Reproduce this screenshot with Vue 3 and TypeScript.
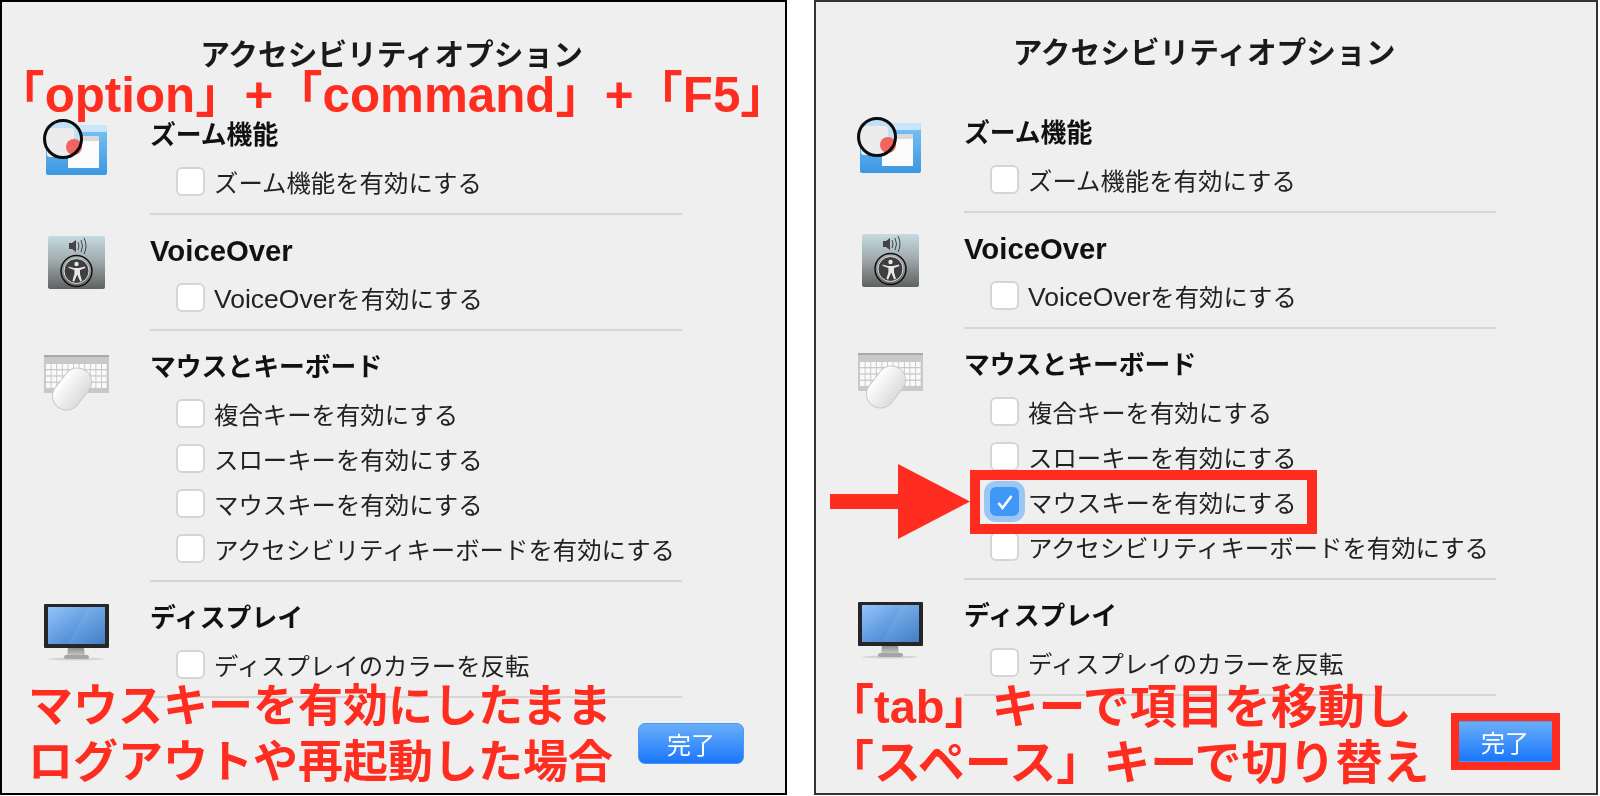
<script setup lang="ts">
interface Section {
  icon: string;
  heading: string;
  options: string[];
}

const sections: Section[] = [
  { icon: 'icon-zoom', heading: 'ズーム機能', options: ['ズーム機能を有効にする'] },
  { icon: 'icon-voice', heading: 'VoiceOver', options: ['VoiceOverを有効にする'] },
  {
    icon: 'icon-keyboard',
    heading: 'マウスとキーボード',
    options: [
      '複合キーを有効にする',
      'スローキーを有効にする',
      'マウスキーを有効にする',
      'アクセシビリティキーボードを有効にする',
    ],
  },
  { icon: 'icon-display', heading: 'ディスプレイ', options: ['ディスプレイのカラーを反転'] },
];

const panels = [
  { side: 'left', notes: ['マウスキーを有効にしたまま', 'ログアウトや再起動した場合'] },
  { side: 'right', notes: ['「tab」キーで項目を移動し', '「スペース」キーで切り替え'] },
];

const keyRows = [0, 1, 2, 3];
const keyCols = [0, 1, 2, 3, 4, 5, 6, 7, 8, 9, 10];

// the one box that is ticked in the right hand panel
function isChecked(side: string, option: string) {
  return side === 'right' && option === 'マウスキーを有効にする';
}
</script>

<template>
  <div class="page">
    <svg class="sprite" aria-hidden="true">
      <defs>
        <linearGradient id="g-blue" x1="0" y1="0" x2="0" y2="1">
          <stop offset="0" stop-color="#7cc4f5" />
          <stop offset="1" stop-color="#3c97e2" />
        </linearGradient>
        <linearGradient id="g-steel" x1="0" y1="0" x2="0" y2="1">
          <stop offset="0" stop-color="#c4dbe2" />
          <stop offset="0.45" stop-color="#a2acae" />
          <stop offset="1" stop-color="#5f6161" />
        </linearGradient>
        <linearGradient id="g-screen" x1="0" y1="0" x2="1" y2="1">
          <stop offset="0" stop-color="#93c4fb" />
          <stop offset="1" stop-color="#2f74c4" />
        </linearGradient>
        <linearGradient id="g-mouse" x1="0" y1="0" x2="1" y2="0">
          <stop offset="0" stop-color="#ffffff" />
          <stop offset="1" stop-color="#dcdcdc" />
        </linearGradient>
        <linearGradient id="g-stand" x1="0" y1="0" x2="0" y2="1">
          <stop offset="0" stop-color="#8f8f8f" />
          <stop offset="1" stop-color="#d4d4d4" />
        </linearGradient>
      </defs>
      <symbol id="icon-zoom" viewBox="0 0 80 72">
        <rect x="10" y="10" width="61" height="50" rx="2" fill="url(#g-blue)" />
        <rect x="10" y="10" width="61" height="7" rx="2" fill="#c8e6fb" />
        <rect x="32" y="21" width="31" height="32" fill="#fbfbfb" />
        <rect x="32" y="21" width="31" height="5" fill="#d9d9d9" />
        <circle cx="27" cy="24" r="18" fill="#bfe0f6" />
        <rect x="11" y="13" width="27" height="29" rx="3" fill="#ececec" />
        <circle cx="38" cy="32" r="8" fill="#f2655f" />
        <circle cx="27" cy="24" r="18.500" fill="none" stroke="#0c0c0c" stroke-width="3" />
      </symbol>
      <symbol id="icon-voice" viewBox="0 -3 80 72">
        <rect x="12" y="2" width="57" height="53" rx="2" fill="url(#g-steel)" />
        <path d="M33 9h3l4-3v12l-4-3h-3z" fill="#444" />
        <path d="M42 8q2 4 0 8M45 6q3 6 0 12M48 4q4 8 0 16" fill="none" stroke="#444" stroke-width="1" />
        <circle cx="40.500" cy="37" r="15.500" fill="none" stroke="#111" stroke-width="1.500" />
        <circle cx="40.500" cy="37" r="12.500" fill="#3e3e3e" stroke="#ddd" stroke-width="1" />
        <circle cx="40.500" cy="30" r="2.200" fill="#e8e8e8" />
        <path d="M32 32.500l6 1.500h5l6-1.500.4 1.500-5.400 2v4l2 7-1.800.5-3-7-3 7-1.800-.5 2-7v-4l-5.400-2z" fill="#e8e8e8" />
      </symbol>
      <symbol id="icon-keyboard" viewBox="0 -3 80 72">
        <rect x="8" y="5" width="65" height="38" fill="#c9c9c9" />
        <rect x="8" y="5" width="65" height="2" fill="#a8a8a8" />
        <g fill="#fafafa">
          <g v-for="r in keyRows" :key="r">
            <rect v-for="c in keyCols" :key="c" :x="10 + c * 5.600" :y="14 + r * 6.300" width="4.600" height="5" />
          </g>
        </g>
        <g transform="rotate(38 36 39)">
          <rect x="22" y="16" width="28" height="46" rx="14" fill="url(#g-mouse)" stroke="#c8c8c8" />
        </g>
      </symbol>
      <symbol id="icon-display" viewBox="0 -4 80 72">
        <ellipse cx="40" cy="57" rx="28" ry="1.500" fill="#d4d4d4" />
        <path d="M32 46h16l1 9H31z" fill="url(#g-stand)" />
        <rect x="28" y="53" width="25" height="4" rx="2" fill="#a5a5a5" />
        <rect x="8" y="2" width="65" height="44" rx="1" fill="#262626" />
        <rect x="12" y="5" width="57" height="37" fill="url(#g-screen)" />
        <path d="M32 42L52 5h17v37z" fill="#fff" fill-opacity="0.08" />
      </symbol>
    </svg>

    <section v-for="panel in panels" :key="panel.side" class="panel" :class="`panel--${panel.side}`">
      <h1 class="title">アクセシビリティオプション</h1>

      <div v-for="s in sections" :key="s.heading" class="section">
        <svg class="section-icon" width="80" height="72"><use :href="`#${s.icon}`" /></svg>
        <div class="section-body">
          <h2 class="heading" :class="{ 'heading--latin': s.heading === 'VoiceOver' }">{{ s.heading }}</h2>
          <label v-for="o in s.options" :key="o" class="option">
            <span class="box" :class="{ 'box--on': isChecked(panel.side, o) }">
              <svg v-if="isChecked(panel.side, o)" width="20" height="20" viewBox="0 0 20 20">
                <path d="M3.500 11l4 5 9-12" fill="none" stroke="#fff" stroke-width="2.600" />
              </svg>
            </span>
            <span><span v-if="o.startsWith('VoiceOver')" class="latin">VoiceOver</span>{{ o.replace('VoiceOver', '') }}</span>
          </label>
        </div>
      </div>

      <div class="footer"><button class="done">完了</button></div>

      <!-- red annotations drawn on top of the screenshot -->
      <p v-if="panel.side === 'left'" class="keys">「option」+「command」+「F5」</p>
      <div class="notes">
        <p v-for="n in panel.notes" :key="n">{{ n }}</p>
      </div>
      <template v-if="panel.side === 'right'">
        <svg class="arrow" width="140" height="75" viewBox="0 0 140 75">
          <path d="M0 30h68V0l72 37.500L68 75V45H0z" fill="#ff2d20" />
        </svg>
        <div class="mark mark--row"></div>
        <div class="mark mark--done"></div>
      </template>
    </section>
  </div>
</template>

<style scoped>
.page {
  display: flex;
  gap: 27px;
  width: 1600px;
  height: 796px;
  background: #fff;
  font-family: "Liberation Sans", "Noto Sans CJK JP", sans-serif;
  color: #222;
  overflow: hidden;
  filter: blur(0.4px);
}

.sprite {
  position: absolute;
  width: 0;
  height: 0;
}

.panel {
  position: relative;
  box-sizing: border-box;
  height: 795px;
  background: #efefef;
  border: 2px solid #000;
  flex: none;
}

.panel--left {
  width: 787px;
}

.panel--right {
  width: 784px;
  border-color: #333;
}

.title {
  margin: 0 0 24px;
  padding: 33px 4px 0 0;
  height: 40px;
  box-sizing: content-box;
  line-height: 40px;
  text-align: center;
  font-size: 29.700px;
  font-weight: 700;
  color: #1a1a1a;
}

.panel--right .title {
  padding-top: 31px;
}

.section {
  display: grid;
  grid-template-columns: 148px 532px;
}

.section-icon {
  margin: 16px 0 0 34px;
  overflow: visible;
}

.section-body {
  box-sizing: border-box;
  padding: 21px 0 9px;
  border-bottom: 2px solid #d6d6d6;
}

.heading {
  margin: 0 0 9px;
  height: 30px;
  line-height: 30px;
  font-size: 25.800px;
  font-weight: 700;
  color: #111;
}

.heading--latin {
  font-size: 29.300px;
}

.option {
  display: flex;
  align-items: center;
  gap: 9px;
  height: 45px;
  padding-left: 26px;
  font-size: 24.400px;
}

.latin {
  font-size: 26.500px;
}

.box {
  box-sizing: border-box;
  display: flex;
  align-items: center;
  justify-content: center;
  width: 29px;
  height: 29px;
  background: #fff;
  border: 2px solid #d5d5d5;
  border-radius: 6px;
  flex: none;
}

.box--on {
  background: #3f97f8;
  border-color: #3f97f8;
  box-shadow: 0 0 0 6px #9cc7f5;
}

.footer {
  padding: 25px 0 0 636px;
}

.done {
  display: block;
  width: 106px;
  height: 41px;
  padding: 0;
  border: 1px solid #4c97f0;
  border-radius: 7px;
  background: linear-gradient(#69aef8, #1a76fb);
  color: #fff;
  font-family: inherit;
  font-size: 24px;
}

.keys {
  position: absolute;
  left: 18px;
  top: 73px;
  margin: 0;
  line-height: 40px;
  font-size: 49.300px;
  font-weight: 700;
  white-space: nowrap;
  color: #ff2d20;
  text-spacing-trim: trim-start;
}

.notes {
  position: absolute;
  left: 26px;
  top: 677px;
  font-size: 45px;
  font-weight: 700;
  line-height: 56px;
  white-space: nowrap;
  color: #ff2d20;
}

.panel--right .notes {
  left: 11px;
  font-size: 47px;
}

.notes p {
  margin: 0;
}

.arrow {
  position: absolute;
  left: 14px;
  top: 462px;
}

.mark {
  position: absolute;
  box-sizing: border-box;
  border: 10px solid #ff2d20;
}

.mark--row {
  left: 154px;
  top: 468px;
  width: 347px;
  height: 64px;
}

.mark--done {
  left: 635px;
  top: 711px;
  width: 109px;
  height: 57px;
  border-width: 8px;
}
</style>

<style>
html,
body {
  background: #fff;
}
</style>
